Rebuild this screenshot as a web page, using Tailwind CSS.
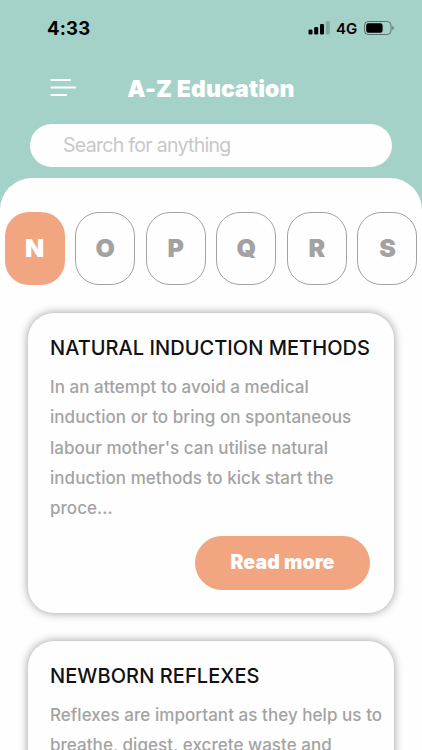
<!DOCTYPE html>
<html lang="en">
<head>
  <meta charset="UTF-8" />
  <meta name="viewport" content="width=device-width, initial-scale=1.0" />
  <title>A-Z Education</title>
  <script src="https://cdn.jsdelivr.net/npm/@tailwindcss/browser@4"></script>
</head>
<body class="bg-[#a4d2c9] font-['Inter',sans-serif] h-[750px] overflow-hidden">

  <!-- status bar -->
  <div class="h-14 pl-[47px] pr-[28px] flex items-center justify-between text-black">
    <span class="text-[18.5px] font-bold leading-none tracking-[0.2px]">4:33</span>
    <div class="flex items-center">
      <svg class="w-[22px] h-[14px]" viewBox="0 0 22 14">
        <rect x="0.5" y="8.5" width="4" height="5" rx="1.2" />
        <rect x="6.2" y="6" width="4" height="7.5" rx="1.2" />
        <rect x="12" y="3" width="4" height="10.5" rx="1.2" />
        <rect x="17.8" y="0.3" width="4" height="13.2" rx="1.2" opacity="0.2" />
      </svg>
      <span class="ml-[6px] w-[22px] text-[15px] font-semibold leading-none whitespace-nowrap">4G</span>
      <svg class="ml-[6px] w-[30px] h-[14px]" viewBox="0 0 30 14">
        <rect x="0.5" y="0.5" width="26.5" height="13" rx="3.8" fill="none" stroke="#000" stroke-opacity="0.45" />
        <rect x="2.2" y="2.2" width="16.4" height="9.6" rx="2.2" />
        <path d="M28.3 5v4c0.9-0.3 1.4-1.1 1.4-2s-0.5-1.7-1.4-2z" opacity="0.45" />
      </svg>
    </div>
  </div>

  <!-- header -->
  <header class="h-[68px] relative flex items-center justify-center">
    <button class="absolute left-[50px] top-[22px]">
      <svg class="w-[27px] h-[19px]" viewBox="0 0 27 19" fill="none" stroke="#fff" stroke-width="1.8" stroke-linecap="round">
        <path d="M1.2 2h19M1.2 9.5h24.2M1.2 17h15" />
      </svg>
    </button>
    <h1 class="text-[23px] font-black text-white leading-none pb-px tracking-[0.1px]">A-Z Education</h1>
  </header>

  <div class="mx-[30px] h-[43px] bg-[#fefefe] rounded-full flex items-center">
    <input type="text" placeholder="Search for anything" class="w-full px-[33px] text-[19.5px] tracking-[-0.7px] placeholder:text-[#c8c8c8] focus:outline-none">
  </div>

  <main class="mt-[11px] bg-[#fefefe] rounded-t-[32px] h-[573px] pt-[34px] overflow-hidden">

    <!-- letters -->
    <div class="px-[4.5px] flex justify-between text-[25px] font-black text-[#a2a2a2]">
      <button class="w-[60px] h-[73px] rounded-[24px] bg-[#f1a581] text-white">N</button>
      <button class="w-[60px] h-[73px] rounded-[24px] border border-[#a2a2a2]">O</button>
      <button class="w-[60px] h-[73px] rounded-[24px] border border-[#a2a2a2]">P</button>
      <button class="w-[60px] h-[73px] rounded-[24px] border border-[#a2a2a2]">Q</button>
      <button class="w-[60px] h-[73px] rounded-[24px] border border-[#a2a2a2]">R</button>
      <button class="w-[60px] h-[73px] rounded-[24px] border border-[#a2a2a2]">S</button>
    </div>

    <!-- articles -->
    <div class="mt-[28px] ml-[28px] mr-[28px] flex flex-col gap-[28px] whitespace-nowrap">
      <article class="h-[300px] rounded-[26px] bg-[#fefefe] shadow-[0_0_10px_rgba(0,0,0,0.4)] pl-[22px] pr-6 pt-[22px]">
        <h2 class="text-[20px] font-medium leading-[26px] tracking-[0.04px] text-[#111]">NATURAL INDUCTION METHODS</h2>
        <p class="mt-[11px] text-[17px] font-medium leading-[30.3px] tracking-[0.05px] text-[#a3a3a3]">
          In an attempt to avoid a medical<br>
          induction or to bring on spontaneous<br>
          labour mother's can utilise natural<br>
          induction methods to kick start the<br>
          proce...
        </p>
        <div class="mt-[12.5px] flex justify-end">
          <button class="w-[175px] h-[54px] rounded-full bg-[#f1a581] text-white text-[19.5px] font-black tracking-[0.1px]">Read more</button>
        </div>
      </article>

      <article class="h-[300px] rounded-[26px] bg-[#fefefe] shadow-[0_0_10px_rgba(0,0,0,0.4)] pl-[22px] pt-[22px]">
        <h2 class="text-[20px] font-medium leading-[26px] tracking-[0.08px] text-[#111]">NEWBORN REFLEXES</h2>
        <p class="mt-[11px] text-[17px] font-medium leading-[30.3px] tracking-[0.05px] text-[#a3a3a3]">
          Reflexes are important as they help us to<br>
          breathe, digest, excrete waste and
        </p>
      </article>
    </div>
  </main>

</body>
</html>
